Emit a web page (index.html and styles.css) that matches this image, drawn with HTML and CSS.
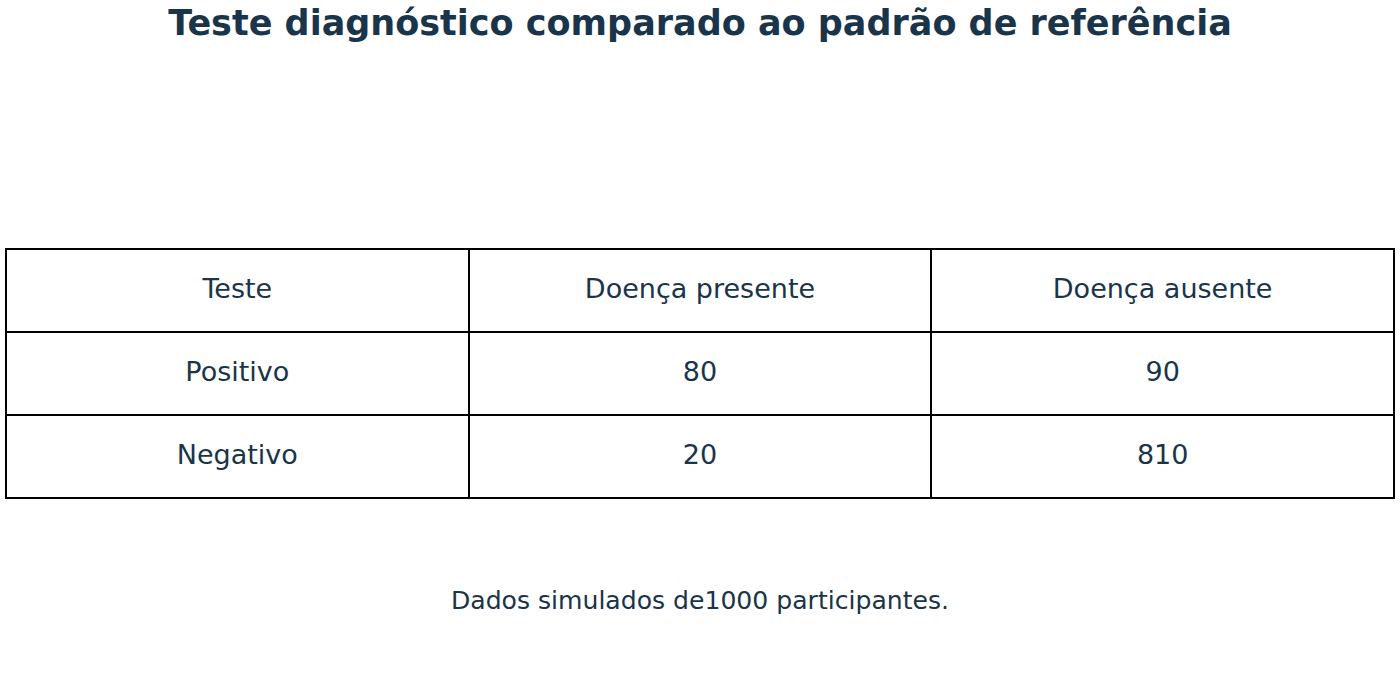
FILE: index.html
```html
<!DOCTYPE html>
<html>
<head>
<meta charset="utf-8">
<link rel="stylesheet" href="styles.css">
</head>
<body>
<div class="page">
  <h1 class="title">Teste diagnóstico comparado ao padrão de referência</h1>
  <div class="grid">
    <div class="cell">Teste</div>
    <div class="cell">Doença presente</div>
    <div class="cell">Doença ausente</div>
    <div class="cell">Positivo</div>
    <div class="cell">80</div>
    <div class="cell">90</div>
    <div class="cell">Negativo</div>
    <div class="cell">20</div>
    <div class="cell">810</div>
  </div>
  <p class="note">Dados simulados de1000 participantes.</p>
</div>
</body>
</html>
```
FILE: styles.css
```css
html, body {
  margin: 0;
  padding: 0;
  background: #ffffff;
}
.page {
  width: 1400px;
  height: 700px;
  font-family: "DejaVu Sans", sans-serif;
  color: #1a344a;
  display: flex;
  flex-direction: column;
  align-items: center;
}
.title {
  margin: 0;
  padding-top: 3px;
  font-size: 35px;
  font-weight: bold;
  line-height: 40px;
  white-space: nowrap;
  text-align: center;
}
.grid {
  margin-top: 205px;
  width: 1390px;
  display: grid;
  grid-template-columns: 1fr 1fr 1fr;
  grid-template-rows: 83px 83px 83px;
  border-top: 2px solid #000;
  border-left: 2px solid #000;
  box-sizing: border-box;
}
.cell {
  border-right: 2px solid #000;
  border-bottom: 2px solid #000;
  display: flex;
  align-items: center;
  justify-content: center;
  padding-bottom: 4px;
  font-size: 27px;
}
.note {
  margin: 87px 0 0;
  font-size: 25.1px;
  line-height: 30px;
}
```
